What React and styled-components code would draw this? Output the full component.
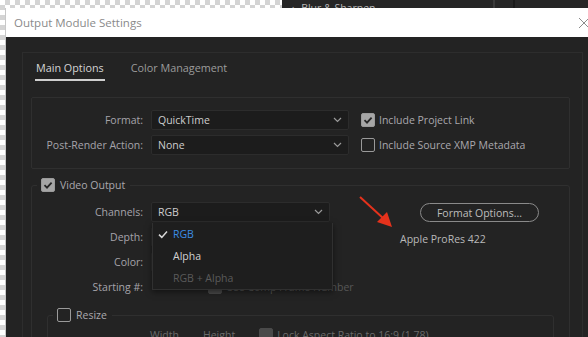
import React from "react";
import styled, { createGlobalStyle } from "styled-components";

const GlobalStyle = createGlobalStyle`
  html, body {
    margin: 0;
    padding: 0;
    overflow: hidden;
    background: #ffffff;
  }
  body {
    font-family: "Open Sans", "Noto Sans", sans-serif;
  }
`;

const Desktop = styled.div`
  position: relative;
  width: 588px;
  height: 337px;
  overflow: hidden;
  background: repeating-conic-gradient(#d4d4d4 0 25%, #ffffff 0 50%) 0 0 / 10px 10px;
`;

const BackPanel = styled.div`
  position: absolute;
  top: 0;
  left: 282px;
  right: 0;
  height: 14px;
  background: #262626;
  display: flex;
  align-items: flex-start;
  padding: 1px 0 0 10px;
  gap: 6px;
  color: #b9b9b9;
  font-size: 10.5px;
  line-height: 14px;
`;

const BackDivider = styled.div`
  position: absolute;
  top: 0;
  bottom: 0;
  left: ${p => p.$x}px;
  width: 2px;
  background: ${p => p.$c};
`;

const Window = styled.div`
  position: absolute;
  left: 5px;
  top: 8px;
  width: 600px;
  bottom: 0;
  display: flex;
  flex-direction: column;
  border-left: 1px solid #c8c8c8;
  box-sizing: border-box;
`;

const TitleBar = styled.div`
  height: 29px;
  flex: none;
  background: #ffffff;
  display: flex;
  align-items: center;
  justify-content: space-between;
  padding: 0 15px 0 8px;
  box-sizing: border-box;
`;

const Title = styled.span`
  font-size: 11.5px;
  color: #8a8a8a;
`;

const Body = styled.div`
  flex: 1;
  background: #232323;
  padding: 15px 22px 0 16px;
  overflow: hidden;
`;

const Frame = styled.div`
  border: 1px solid #2d2d2d;
  border-bottom: none;
  min-height: 340px;
  padding: 0 12px 0 8px;
`;

const TabBar = styled.div`
  display: flex;
  gap: 25px;
  padding: 7px 0 0 4px;
  margin-bottom: 16px;
`;

const Tab = styled.div`
  font-size: 10.8px;
  line-height: 16px;
  padding: 0 1px 3px;
  color: ${p => (p.$active ? "#d6d6d6" : "#9c9c9c")};
  border-bottom: 2px solid ${p => (p.$active ? "#cfcfcf" : "transparent")};
`;

const Group = styled.div`
  border: 1px solid #2f2f2f;
  border-radius: 2px;
  padding: 12px 0 13px;
`;

const FieldGrid = styled.div`
  display: grid;
  grid-template-columns: 111px ${p => p.$sel}px 1fr;
  grid-auto-rows: 20px;
  column-gap: 8px;
  row-gap: 5px;
  align-items: center;
`;

const Label = styled.div`
  text-align: right;
  font-size: 10.5px;
  color: #a6a3ab;
  white-space: nowrap;
`;

const SelectWrap = styled.div`
  position: relative;
  height: 20px;
`;

const SelectBox = styled.div`
  box-sizing: border-box;
  height: 20px;
  background: #1c1c1c;
  border: 1px solid #2c2c2c;
  border-radius: 2px;
  display: flex;
  align-items: center;
  justify-content: space-between;
  padding: 0 6px 0 6px;
  font-size: 10.5px;
  color: #cdcdcd;
`;

const CheckRow = styled.label`
  display: flex;
  align-items: center;
  gap: 4px;
  margin-left: 4px;
  font-size: 10.5px;
  color: ${p => (p.$dim ? "#575757" : "#aaa8ae")};
  white-space: nowrap;
`;

const Box = styled.span`
  flex: none;
  box-sizing: border-box;
  width: 14px;
  height: 14px;
  border-radius: 2px;
  border: 1.5px solid ${p => (p.$dim ? "#4a4a4a" : "#9a9a9a")};
  background: ${p => (p.$on ? (p.$dim ? "#4a4a4a" : "#a6a6a6") : "transparent")};
  display: inline-flex;
  align-items: center;
  justify-content: center;
`;

const Fieldset = styled.fieldset`
  margin: ${p => p.$m};
  padding: 0 0 ${p => p.$pb || 0}px;
  border: 1px solid #2f2f2f;
  border-radius: 3px;
  min-width: 0;
`;

const Legend = styled.legend`
  display: flex;
  align-items: center;
  gap: 5px;
  margin-left: 5px;
  padding: 0 5px 0 4px;
  height: 14px;
  font-size: 10.5px;
  line-height: 14px;
  color: #aaa8ae;
`;

const VideoBody = styled.div`
  padding: 10px 0 0;
`;

const RightPanel = styled.div`
  grid-column: 3;
  grid-row: 1 / span 3;
  align-self: start;
  display: flex;
  flex-direction: column;
  align-items: flex-start;
  padding: 1px 0 0 62px;
`;

const PillButton = styled.div`
  box-sizing: border-box;
  margin-left: 20px;
  width: 119px;
  height: 19px;
  border: 1.5px solid #8a8a8a;
  border-radius: 10px;
  display: flex;
  align-items: center;
  justify-content: center;
  font-size: 10.5px;
  color: #bdbdbd;
`;

const CodecName = styled.div`
  margin-top: 9px;
  font-size: 10.5px;
  line-height: 16px;
  color: #b9b9b9;
`;

const Menu = styled.div`
  position: absolute;
  top: 21px;
  left: 1px;
  width: 179px;
  background: #1e1e1e;
  border: 1px solid #303030;
  border-top: none;
  box-shadow: 0 2px 6px rgba(0, 0, 0, 0.5);
  z-index: 2;
`;

const MenuItem = styled.div`
  position: relative;
  height: 22px;
  display: flex;
  align-items: center;
  padding-left: 20px;
  font-size: 10.5px;
  color: ${p => (p.$selected ? "#3b8de6" : p.$disabled ? "#5a5a5a" : "#d2d2d2")};
`;

const Tick = styled.svg`
  position: absolute;
  left: 5px;
  top: 7px;
`;

const StartRow = styled.div`
  grid-column: 2 / span 2;
  display: flex;
  align-items: center;
`;

const NumberField = styled.div`
  width: 53px;
  height: 20px;
`;

const ResizeBody = styled.div`
  display: flex;
  gap: 24px;
  padding: 6px 0 0 102px;
  font-size: 10.5px;
  color: #6a6a6a;
  line-height: 14px;
`;

const LockRow = styled.span`
  display: inline-flex;
  align-items: center;
  gap: 4px;
`;

const ArrowMark = styled.svg`
  position: absolute;
  left: 0;
  top: 0;
  pointer-events: none;
`;

const Chevron = () => (
  <svg width="9" height="6" viewBox="0 0 9 6">
    <polyline points="1,1 4.5,4.5 8,1" fill="none" stroke="#9a9a9a" strokeWidth="1.2" />
  </svg>
);

const CheckMark = ({ color = "#262626" }) => (
  <svg width="10" height="10" viewBox="0 0 10 10">
    <path d="M1.5 5.2 L4 7.6 L8.6 2.6" fill="none" stroke={color} strokeWidth="1.8" />
  </svg>
);

const Select = ({ value, children }) => (
  <SelectWrap>
    <SelectBox>
      <span>{value}</span>
      <Chevron />
    </SelectBox>
    {children}
  </SelectWrap>
);

const Checkbox = ({ on, dim, children }) => (
  <CheckRow $dim={dim}>
    <Box $on={on} $dim={dim}>{on && !dim && <CheckMark />}</Box>
    {children}
  </CheckRow>
);

export default function App() {
  return (
    <>
      <GlobalStyle />
      <Desktop>
        <BackPanel>
          <span>›</span>
          <span>Blur &amp; Sharpen</span>
          <BackDivider $x={211} $c="#3a3a3a" />
          <BackDivider $x={231} $c="#1a1a1a" />
        </BackPanel>

        <Window>
          <TitleBar>
            <Title>Output Module Settings</Title>
            <svg width="12" height="12" viewBox="0 0 12 12">
              <path d="M1 1 L11 11 M11 1 L1 11" stroke="#8c8c8c" strokeWidth="1" />
            </svg>
          </TitleBar>

          <Body>
            <Frame>
              <TabBar>
                <Tab $active>Main Options</Tab>
                <Tab>Color Management</Tab>
              </TabBar>

              <Group>
                <FieldGrid $sel={198}>
                  <Label>Format:</Label>
                  <Select value="QuickTime" />
                  <Checkbox on>Include Project Link</Checkbox>
                  <Label>Post-Render Action:</Label>
                  <Select value="None" />
                  <Checkbox>Include Source XMP Metadata</Checkbox>
                </FieldGrid>
              </Group>

              <Fieldset $m="9px 0 0">
                <Legend>
                  <Box $on><CheckMark /></Box>
                  Video Output
                </Legend>
                <VideoBody>
                  <FieldGrid $sel={179}>
                    <Label>Channels:</Label>
                    <Select value="RGB">
                      <Menu>
                        <MenuItem $selected>
                          <Tick width="10" height="9" viewBox="0 0 10 9">
                            <path d="M1 4.6 L3.8 7.4 L9 1.5" fill="none" stroke="#d8d8d8" strokeWidth="1.5" />
                          </Tick>
                          RGB
                        </MenuItem>
                        <MenuItem>Alpha</MenuItem>
                        <MenuItem $disabled>RGB + Alpha</MenuItem>
                      </Menu>
                    </Select>
                    <RightPanel>
                      <PillButton>Format Options...</PillButton>
                      <CodecName>Apple ProRes 422</CodecName>
                    </RightPanel>
                    <Label>Depth:</Label>
                    <Select />
                    <Label>Color:</Label>
                    <Select />
                    <Label>Starting #:</Label>
                    <StartRow>
                      <NumberField />
                      <Checkbox on dim>Use Comp Frame Number</Checkbox>
                    </StartRow>
                  </FieldGrid>

                  <Fieldset $m="11px 15px 0" $pb={40}>
                    <Legend>
                      <Box />
                      Resize
                    </Legend>
                    <ResizeBody>
                      <span>Width</span>
                      <span>Height</span>
                      <LockRow>
                        <Box $on $dim />
                        Lock Aspect Ratio to 16:9 (1.78)
                      </LockRow>
                    </ResizeBody>
                  </Fieldset>
                </VideoBody>
              </Fieldset>
            </Frame>
          </Body>
        </Window>

        <ArrowMark width="588" height="337" viewBox="0 0 588 337">
          <line x1="360" y1="197" x2="384" y2="219" stroke="#e5321c" strokeWidth="2" />
          <polygon points="392,227 377,222 387,212" fill="#e5321c" />
        </ArrowMark>
      </Desktop>
    </>
  );
}
